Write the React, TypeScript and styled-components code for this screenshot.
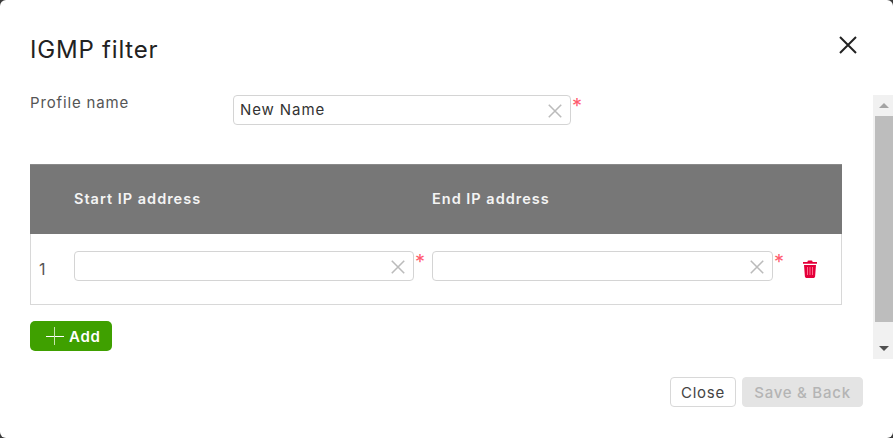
import { createGlobalStyle, styled } from 'styled-components';

const Global = createGlobalStyle`
    html, body {
        margin: 0;
        padding: 0;
        background: #3a3a3a;
    }
    * {
        box-sizing: border-box;
    }
`;

const St = {
    Dialog: styled.div`
        width: 893px;
        height: 438px;
        background: #fff;
        border-radius: 6px;
        overflow: hidden;
        display: flex;
        flex-direction: column;
        font-family: 'Inter', 'Noto Sans', sans-serif;
        color: #333;
    `,
    Header: styled.div`
        height: 95px;
        flex: none;
        display: flex;
        justify-content: space-between;
        padding: 34px 36px 0 30px;
    `,
    Title: styled.div`
        font-size: 24px;
        line-height: 32px;
        color: #222;
        letter-spacing: 0.8px;
    `,
    CloseX: styled.div`
        width: 18px;
        height: 18px;
        margin-top: 2px;
        color: #222;
    `,
    Middle: styled.div`
        height: 264px;
        flex: none;
        display: flex;
    `,
    Content: styled.div`
        flex: 1;
        padding: 0 31px 0 30px;
        display: flex;
        flex-direction: column;
    `,
    ProfileRow: styled.div`
        display: flex;
        height: 69px;
        flex: none;
    `,
    Label: styled.div`
        width: 203px;
        font-size: 15px;
        line-height: 16px;
        letter-spacing: 0.85px;
        color: #555;
    `,
    Table: styled.div`
        height: 141px;
        flex: none;
        border: 1px solid #d8d8d8;
        border-top: none;
    `,
    HeadRow: styled.div`
        height: 70px;
        background: #777;
        border-top: 1px solid #8a8a8a;
        margin: 0 -1px;
        display: flex;
        align-items: center;
        padding: 0 0 2px 44px;
        color: #f4f4f4;
        font-size: 14.5px;
        font-weight: 600;
        letter-spacing: 1px;
    `,
    HeadCell: styled.div`
        width: 358px;
    `,
    Row: styled.div`
        height: 70px;
        margin-top: 1px;
        display: flex;
        padding: 16px 0 0 8px;
    `,
    Index: styled.div`
        width: 35px;
        font-size: 16px;
        line-height: 36px;
        color: #555;
    `,
    FieldWrap: styled.div<{ $width: number; $gap?: number }>`
        display: flex;
        width: ${({ $width }) => $width}px;
        margin-right: ${({ $gap }) => $gap ?? 0}px;
        flex: none;
    `,
    Field: styled.div`
        flex: 1;
        height: 30px;
        border: 1px solid #d4d4d4;
        border-radius: 4px;
        display: flex;
        align-items: center;
        justify-content: space-between;
        padding: 0 8px 1px 6px;
        font-size: 15px;
        letter-spacing: 0.9px;
        color: #333;
    `,
    ClearX: styled.div`
        width: 14px;
        height: 14px;
        flex: none;
        color: #bbb;
    `,
    Star: styled.span`
        width: 11px;
        margin-left: 1px;
        font-size: 20px;
        line-height: 22px;
        color: #ff5a6e;
        flex: none;
    `,
    Trash: styled.div`
        width: 16px;
        height: 18px;
        margin: 9px 0 0 17px;
        color: #e4003a;
    `,
    AddButton: styled.button`
        width: 82px;
        height: 30px;
        margin-top: 16px;
        padding: 0 0 0 16px;
        border: none;
        border-radius: 5px;
        background: #3fa000;
        color: #fff;
        font: 600 15px 'Inter', sans-serif;
        letter-spacing: 0.7px;
        display: flex;
        align-items: center;
        gap: 5px;
    `,
    Scrollbar: styled.div`
        width: 20px;
        flex: none;
        background: #f1f1f1;
        display: flex;
        flex-direction: column;
        align-items: flex-end;
    `,
    ArrowCell: styled.div`
        width: 18px;
        height: 21px;
        display: flex;
        align-items: center;
        justify-content: center;
    `,
    Arrow: styled.div<{ $down?: boolean }>`
        width: 0;
        height: 0;
        border-left: 5px solid transparent;
        border-right: 5px solid transparent;
        ${({ $down }) => ($down ? 'border-top: 5px solid #505050;' : 'border-bottom: 5px solid #a3a3a3;')}
    `,
    Thumb: styled.div`
        width: 18px;
        height: 206px;
        background: #bdbdbd;
    `,
    Spacer: styled.div`
        flex: 1;
    `,
    Footer: styled.div`
        flex: 1;
        display: flex;
        justify-content: flex-end;
        gap: 6px;
        padding: 18px 30px 0 0;
    `,
    FooterButton: styled.button<{ $disabled?: boolean }>`
        height: 30px;
        padding: 0;
        width: ${({ $disabled }) => ($disabled ? 121 : 66)}px;
        border-radius: 4px;
        border: 1px solid ${({ $disabled }) => ($disabled ? '#e4e4e4' : '#d8d8d8')};
        background: ${({ $disabled }) => ($disabled ? '#e4e4e4' : '#fff')};
        color: ${({ $disabled }) => ($disabled ? '#b4b4b4' : '#444')};
        font: ${({ $disabled }) => ($disabled ? 500 : 400)} 15px 'Inter', sans-serif;
        letter-spacing: 0.75px;
    `,
};

const Cross = () => (
    <svg viewBox="0 0 18 18" width="100%" height="100%" fill="none" stroke="currentColor" strokeWidth={2}>
        <path d="M1 1 17 17M17 1 1 17" />
    </svg>
);

const TrashIcon = () => (
    <svg viewBox="0 0 16 18" width="100%" height="100%">
        <path fill="currentColor" d="M5.5 1.5Q5.5.5 6.5.5h3q1 0 1 1V2H15v1.8H1V2h4.5zM2 5h12l-.9 11.600q-.1 1.400-1.500 1.400H4.400q-1.400 0-1.500-1.400z" />
        <path stroke="#ff6b8c" strokeWidth="1" d="M5.500 7v8M8 7v8M10.500 7v8" />
    </svg>
);

const Field = ({ value, width, gap }: { value?: string; width: number; gap?: number }) => (
    <St.FieldWrap $width={width} $gap={gap}>
        <St.Field>
            <span>{value}</span>
            <St.ClearX>
                <Cross />
            </St.ClearX>
        </St.Field>
        <St.Star>*</St.Star>
    </St.FieldWrap>
);

export default function App() {
    return (
        <St.Dialog>
            <Global />
            <St.Header>
                <St.Title>IGMP filter</St.Title>
                <St.CloseX>
                    <Cross />
                </St.CloseX>
            </St.Header>
            <St.Middle>
                <St.Content>
                    <St.ProfileRow>
                        <St.Label>Profile name</St.Label>
                        <Field value="New Name" width={350} />
                    </St.ProfileRow>
                    <St.Table>
                        <St.HeadRow>
                            <St.HeadCell>Start IP address</St.HeadCell>
                            <St.HeadCell>End IP address</St.HeadCell>
                        </St.HeadRow>
                        <St.Row>
                            <St.Index>1</St.Index>
                            <Field width={352} gap={6} />
                            <Field width={353} />
                            <St.Trash>
                                <TrashIcon />
                            </St.Trash>
                        </St.Row>
                    </St.Table>
                    <St.AddButton>
                        <svg width="18" height="18" viewBox="0 0 18 18" stroke="#fff" strokeWidth="1">
                            <path d="M0 9.500h18" />
                            <path d="M8.500 0v18" stroke="#c8e6b0" />
                        </svg>
                        Add
                    </St.AddButton>
                </St.Content>
                <St.Scrollbar>
                    <St.ArrowCell>
                        <St.Arrow />
                    </St.ArrowCell>
                    <St.Thumb />
                    <St.Spacer />
                    <St.ArrowCell>
                        <St.Arrow $down />
                    </St.ArrowCell>
                </St.Scrollbar>
            </St.Middle>
            <St.Footer>
                <St.FooterButton>Close</St.FooterButton>
                <St.FooterButton $disabled>Save &amp; Back</St.FooterButton>
            </St.Footer>
        </St.Dialog>
    );
}
